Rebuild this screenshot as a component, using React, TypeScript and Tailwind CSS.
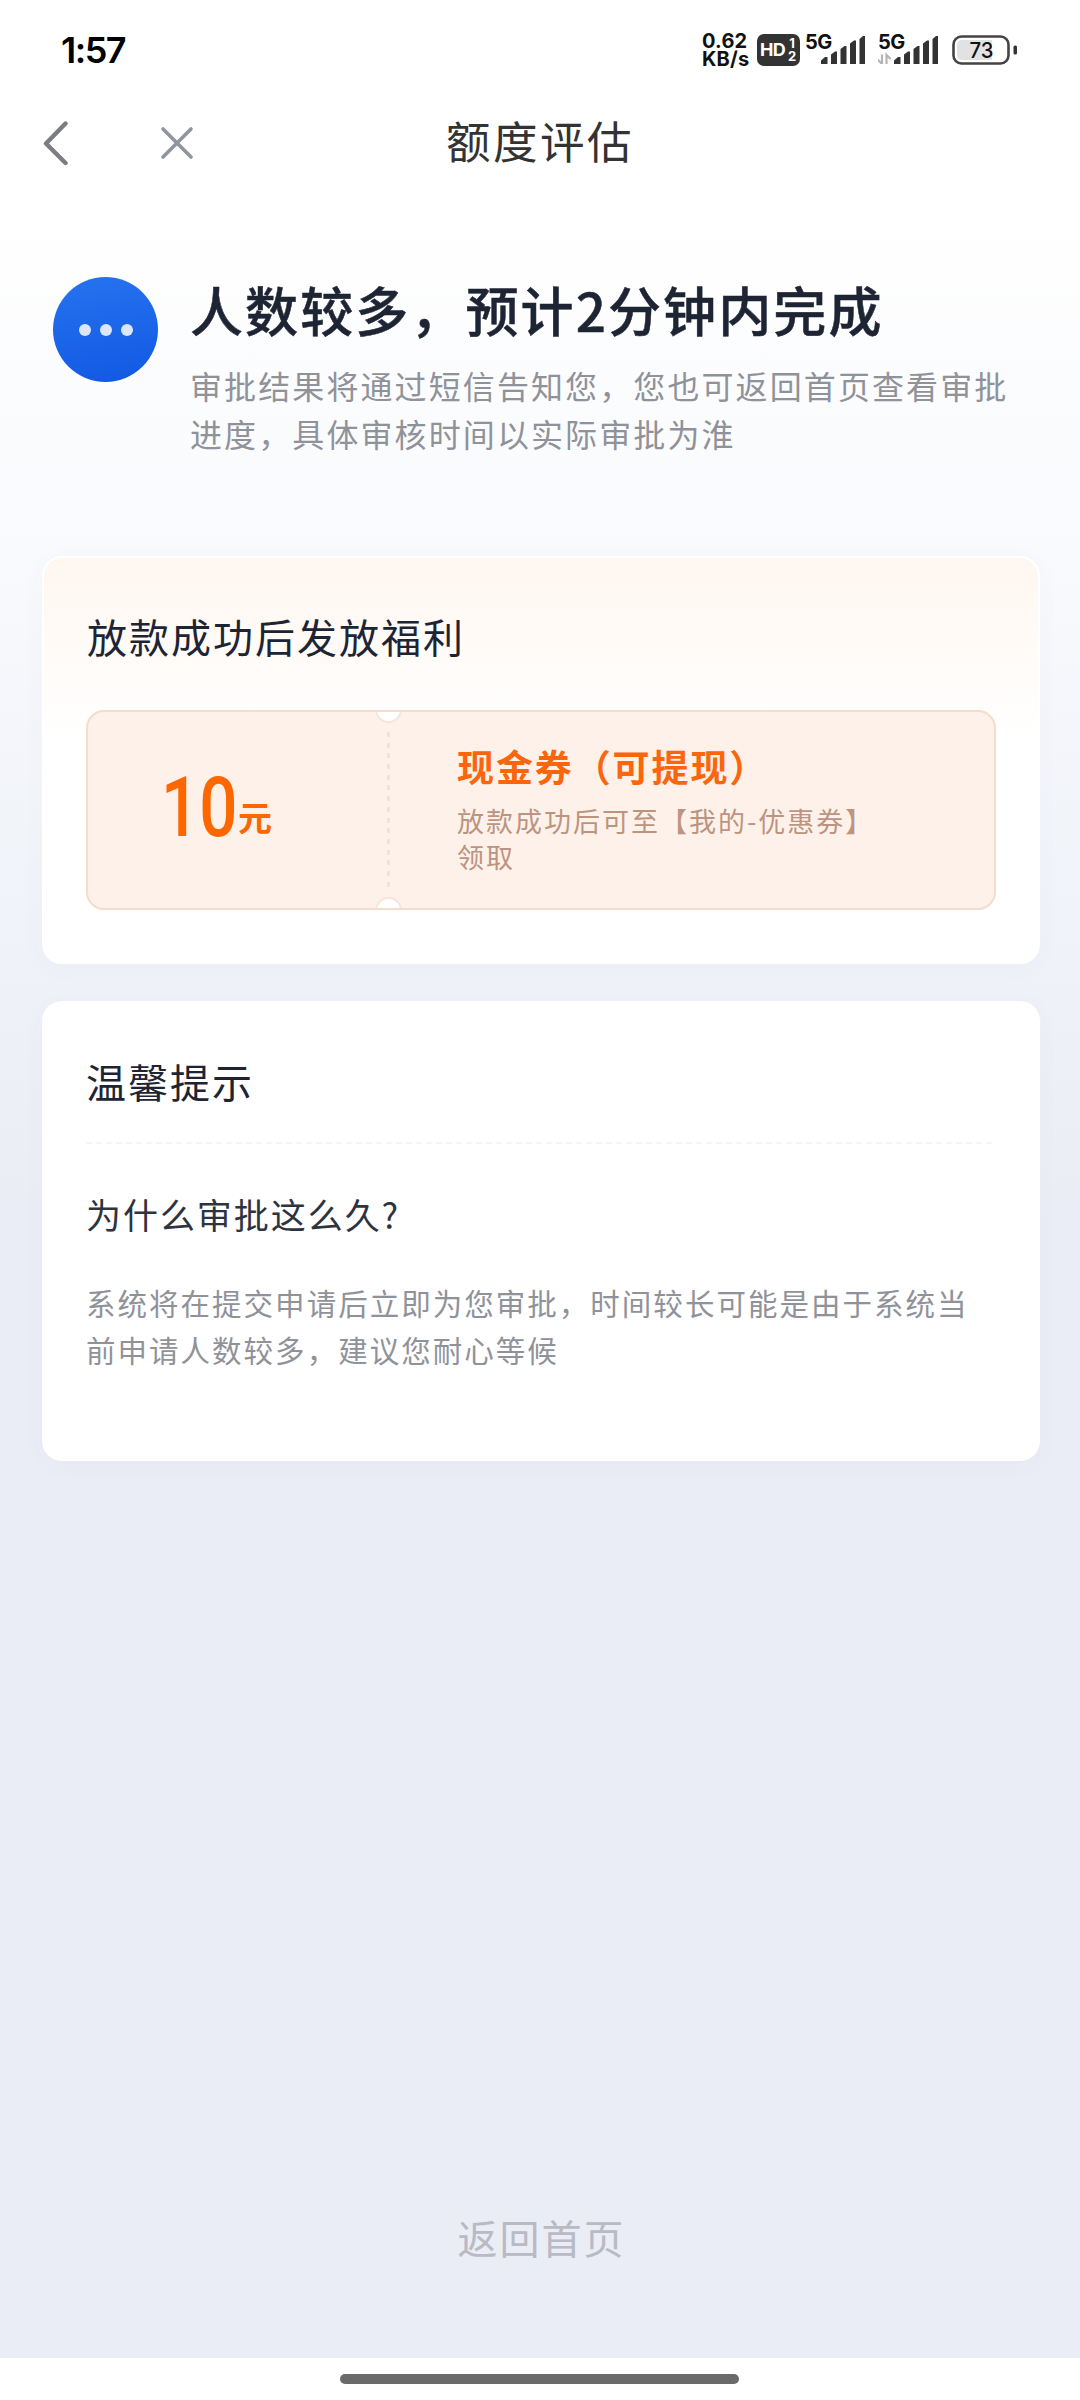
import React from "react";

const CJK = "font-['Noto_Sans_CJK_SC',sans-serif]";

function Signal({ data = false }: { data?: boolean }) {
  return (
    <div className="relative h-[38px] w-[61px]">
      <span className="absolute -top-[1px] left-0 text-[20px] leading-[24px] font-bold tracking-[-0.6px] text-[#111]">5G</span>
      <svg className="h-[38px] w-[61px]" viewBox="0 -3 61 38" fill="#333">
        {data && (
          <g fill="none" stroke="#b5b5b5" strokeWidth="2.200">
            <path d="M4 20.500v9.500M-.5 25.500l4 4M8.500 30v-9l4 4" />
          </g>
        )}
        <path d="M16 30v-3.500l4-3.500h2.500v7z" />
        <path d="M26 30V20.500l4-3h2V30z" />
        <path d="M35.500 30V15l4-3h2V30z" />
        <path d="M45 30V9.500l4-3h2V30z" />
        <path d="M54.500 30V5l3.500-3H60V30z" />
      </svg>
    </div>
  );
}

function StatusBar() {
  return (
    <div className="flex h-[100px] items-center justify-between pr-[61px] pl-[61px] font-['Inter',sans-serif]">
      <span className="text-[36px] leading-[36px] font-semibold tracking-[-1.5px] text-black">1:57</span>
      <div className="flex items-center">
        <div className="flex w-[55px] flex-col text-[20px] leading-[18.500px] font-bold text-[#111]">
          <span className="tracking-[0.2px]">0.62</span>
          <span className="tracking-[0.2px]">KB/s</span>
        </div>
        <div className="flex h-[32px] w-[43px] items-center rounded-[7px] bg-[#333] pl-[3px] font-bold text-white">
          <span className="w-[28px] text-[18px] leading-[24px] tracking-[-0.8px]">HD</span>
          <span className="flex flex-col items-center text-[13px] leading-[13px]">
            <span>1</span>
            <span>2</span>
          </span>
        </div>
        <div className="ml-[5px] flex gap-3">
          <Signal />
          <Signal data />
        </div>
        <svg className="ml-[13px] h-[30px] w-[67px]" viewBox="0 0 67 30">
          <rect x="1.500" y="1.500" width="55" height="27" rx="8" fill="#fff" stroke="#444" strokeWidth="2.600" />
          <path d="M10 5H40V25H10a5 5 0 0 1-5-5V10a5 5 0 0 1 5-5z" fill="#e2e2e2" />
          <rect x="61.500" y="10.500" width="3.500" height="9" rx="1.500" fill="#333" />
          <text x="17.500" y="22.500" fontFamily="Inter, sans-serif" fontWeight="500" fontSize="22" textLength="24" lengthAdjust="spacingAndGlyphs" fill="#111">73</text>
        </svg>
      </div>
    </div>
  );
}

function NavBar() {
  return (
    <div className="grid h-[86px] grid-cols-[1fr_auto_1fr] items-center">
      <div className="flex items-center pl-[41px]">
        <svg className="h-[46px] w-[28px]" viewBox="0 0 28 46" fill="none" stroke="#7b7d83" strokeWidth="4.400" strokeLinecap="round" strokeLinejoin="round">
          <path d="M24.500 3.500L5 23.500L24.500 43" />
        </svg>
        <svg className="ml-[91px] h-[34px] w-[34px]" viewBox="0 0 34 34" fill="none" stroke="#8f959f" strokeWidth="3.600" strokeLinecap="round">
          <path d="M3 3L31 31M31 3L3 31" />
        </svg>
      </div>
      <h1 className="-mt-[6px] text-[44.500px] leading-[60px] tracking-[2.500px] text-[#333]">额度评估</h1>
      <div />
    </div>
  );
}

function Hero() {
  return (
    <section className="flex h-[370px] items-start pt-[91px] pl-[53px]">
      <div className="flex h-[105px] w-[105px] shrink-0 items-center justify-center gap-[9px] rounded-full bg-linear-170 from-[#2673f0] to-[#1258e2]">
        <i className="h-3 w-3 rounded-full bg-[#dbe6fb]" />
        <i className="h-3 w-3 rounded-full bg-[#dbe6fb]" />
        <i className="h-3 w-3 rounded-full bg-[#dbe6fb]" />
      </div>
      <div className="ml-[32px] whitespace-nowrap">
        <h2 className="mt-[2px] text-[53px] leading-[60px] font-medium tracking-[2.100px] text-[#1d2433] [-webkit-text-stroke:0.5px_#1d2433]">人数较多，预计2分钟内完成</h2>
        <p className="mt-[22px] text-[32px] leading-[48px] tracking-[2.100px] text-[#909299]">
          审批结果将通过短信告知您，您也可返回首页查看审批
          <br />
          进度，具体审核时间以实际审批为淮
        </p>
      </div>
    </section>
  );
}

function Coupon() {
  return (
    <div className="relative mt-[46px] flex h-[200px] overflow-hidden rounded-[18px] border-2 border-[#f5dccb] bg-[#fef1ea]">
      <div className="flex w-[299px] items-start pt-[46px] pl-[73px] text-[#fe6600]">
        <span className="mt-[1px] w-[77px]">
          <span className="inline-block origin-left scale-x-[0.8] font-['Roboto',sans-serif] text-[84px] leading-[98px] font-medium">10</span>
        </span>
        <span className="mt-[39px] text-[34px] leading-[40px] font-bold">元</span>
      </div>
      <div className="my-[20px] w-[3px] bg-[repeating-linear-gradient(to_bottom,#f5e0d5_0_5px,transparent_5px_10.700px)]" />
      <div className="pt-[30px] pl-[67px] whitespace-nowrap">
        <h4 className="text-[37px] leading-[48px] font-bold tracking-[1.900px] text-[#fb650c]">现金券（可提现）</h4>
        <p className="mt-[13px] text-[27px] leading-[36px] tracking-[2px] text-[#bc9480]">
          放款成功后可至【我的-优惠券】
          <br />
          领取
        </p>
      </div>
      <i className="absolute -top-[16px] left-[287px] h-[27px] w-[27px] rounded-full border-2 border-[#f8e5d9] bg-white" />
      <i className="absolute -bottom-[16px] left-[287px] h-[27px] w-[27px] rounded-full border-2 border-[#f8e5d9] bg-white" />
    </div>
  );
}

export default function App() {
  return (
    <div className={`${CJK} flex h-[2400px] w-[1080px] flex-col overflow-hidden bg-[#eaedf5]`}>
      <div className="flex flex-1 flex-col bg-[linear-gradient(to_bottom,#fff_0,#fff_200px,#f9fafd_540px,#f4f6fb_740px,#eff2f8_950px,#eaedf5_1220px)]">
        <StatusBar />
        <NavBar />
        <Hero />
        <main className="mr-[40px] ml-[42px] flex flex-col gap-[37px]">
          <section className="h-[408px] rounded-[20px] border-2 border-white bg-linear-to-b from-[#fff7f0] to-white to-45% px-[42px] pt-[50px] shadow-[0_4px_24px_rgba(80,100,140,0.03)]">
            <h3 className="ml-[1px] text-[40px] leading-[56px] tracking-[2px] text-[#1d2433]">放款成功后发放福利</h3>
            <Coupon />
          </section>
          <section className="h-[460px] rounded-[20px] bg-white px-[44px] pt-[52px] shadow-[0_4px_24px_rgba(80,100,140,0.03)]">
            <h3 className="text-[40px] leading-[56px] tracking-[2px] text-[#1d2433]">温馨提示</h3>
            <div className="mt-[33px] h-[2px] bg-[repeating-linear-gradient(to_right,#f5f5f7_0_6px,transparent_6px_10px)]" />
            <h4 className="mt-[45px] text-[35px] leading-[50px] tracking-[1.950px] text-[#2e3340]">为什么审批这么久?</h4>
            <p className="mt-[40px] text-[29.500px] leading-[47px] tracking-[2.020px] whitespace-nowrap text-[#909299]">
              系统将在提交申请后立即为您审批，时间较长可能是由于系统当
              <br />
              前申请人数较多，建议您耐心等候
            </p>
          </section>
        </main>
        <button className="mt-auto mb-[91px] self-center pl-[3px] text-[40px] leading-[60px] tracking-[2px] text-[#b9bac4]">返回首页</button>
      </div>
      <div className="flex h-[42px] justify-center bg-white pt-[16px] pr-[2px]">
        <div className="h-[10px] w-[399px] rounded-full bg-[#6a6a6a]" />
      </div>
    </div>
  );
}
